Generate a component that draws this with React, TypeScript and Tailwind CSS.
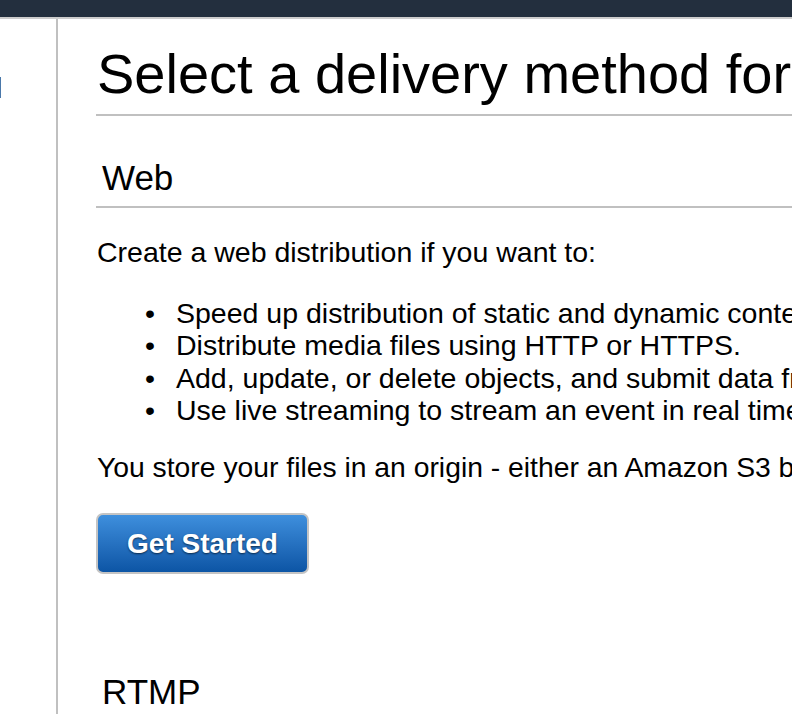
import React from "react";

const bullets = [
  "Speed up distribution of static and dynamic content, for example, .html, .css, .php, and graphics files.",
  "Distribute media files using HTTP or HTTPS.",
  "Add, update, or delete objects, and submit data from web forms.",
  "Use live streaming to stream an event in real time.",
];

const App = () => {
  return (
    <div
      className="w-[792px] h-[714px] overflow-hidden bg-white text-black whitespace-nowrap"
      style={{ fontFamily: '"Liberation Sans", Arial, sans-serif' }}
    >
      {/* Top nav bar */}
      <div className="h-[17px] bg-[#232f3e]" />
      <div className="h-[2px] bg-[#cccccc]" />

      <div className="flex h-[695px]">
        {/* Sidebar */}
        <div className="w-[58px] shrink-0 border-r-2 border-[#c0c0c0] pt-[58px]">
          <div className="w-[1px] h-[21px] bg-[#4a78aa]" />
        </div>

        {/* Main */}
        <div className="flex-1 min-w-0 pl-[38px] pt-[23px]">
          <h1 className="text-[56px] leading-[64px] pb-[8px] pl-[1px] border-b-2 border-[#c0c0c0] w-[1000px]">
            Select a delivery method for your content.
          </h1>

          <h2 className="mt-[42px] text-[35px] leading-[40px] pl-[6px] pb-[8px] border-b-2 border-[#c0c0c0] w-[1000px]">
            Web
          </h2>

          <p className="mt-[28px] text-[28.5px] leading-[32px] pl-[1px]">
            Create a web distribution if you want to:
          </p>

          {/* Bullet list */}
          <ul className="mt-[29px] pl-[49px] text-[28.5px] leading-[32.3px]">
            {bullets.map((b) => (
              <li key={b} className="flex">
                <span className="w-[31px] shrink-0">•</span>
                <span>{b}</span>
              </li>
            ))}
          </ul>

          <p className="mt-[25px] text-[28.3px] leading-[32px] pl-[1px]">
            You store your files in an origin - either an Amazon S3 bucket or a web server.
          </p>

          <button
            className="mt-[30px] w-[213px] h-[61px] rounded-[7px] border-2 border-[#c4c4c4] bg-gradient-to-b from-[#3e8fdd] to-[#0c55a5] text-white font-bold text-[28px] leading-none [text-shadow:0_1px_2px_rgba(0,0,0,0.6)]"
          >
            Get Started
          </button>

          <h2 className="mt-[98px] text-[35px] leading-[40px] pl-[6px] pb-[8px] border-b-2 border-[#c0c0c0] w-[1000px]">
            RTMP
          </h2>
        </div>
      </div>
    </div>
  );
};

export default App;
